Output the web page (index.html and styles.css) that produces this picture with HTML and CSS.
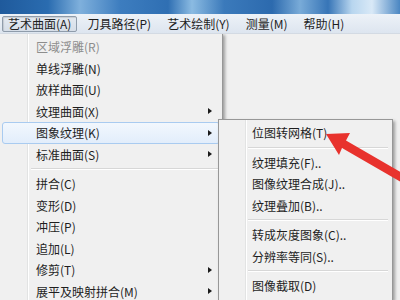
FILE: index.html
```html
<!DOCTYPE html>
<html lang="zh-CN">
<head>
  <meta charset="UTF-8">
  <title>艺术曲面菜单</title>
  <link rel="stylesheet" href="styles.css">
</head>
<body>

<div class="titlebar"></div>

<div class="menubar">
  <div class="menubar-item active">艺术曲面(A)</div>
  <div class="menubar-item">刀具路径(P)</div>
  <div class="menubar-item">艺术绘制(Y)</div>
  <div class="menubar-item">测量(M)</div>
  <div class="menubar-item">帮助(H)</div>
</div>

<div class="workspace">

  <div class="menu main-menu">
    <div class="item disabled">区域浮雕(R)</div>
    <div class="item">单线浮雕(N)</div>
    <div class="item">放样曲面(U)</div>
    <div class="item sub">纹理曲面(X)<span class="arrow"></span></div>
    <div class="item sub hover">图象纹理(K)<span class="arrow"></span></div>
    <div class="item sub">标准曲面(S)<span class="arrow"></span></div>
    <div class="sep"></div>
    <div class="item">拼合(C)</div>
    <div class="item">变形(D)</div>
    <div class="item">冲压(P)</div>
    <div class="item">追加(L)</div>
    <div class="item sub">修剪(T)<span class="arrow"></span></div>
    <div class="item sub">展平及映射拼合(M)<span class="arrow"></span></div>
  </div>

  <div class="menu sub-menu">
    <div class="item">位图转网格(T)</div>
    <div class="sep"></div>
    <div class="item">纹理填充(F)..</div>
    <div class="item">图像纹理合成(J)..</div>
    <div class="item">纹理叠加(B)..</div>
    <div class="sep"></div>
    <div class="item">转成灰度图象(C)..</div>
    <div class="item">分辨率等同(S)..</div>
    <div class="sep"></div>
    <div class="item">图像截取(D)</div>
  </div>

  <!-- 标注箭头 -->
  <svg class="callout" width="400" height="266" viewBox="0 34 400 266">
    <polygon points="326,134 350,133 346,140.5 404,174 400,181.5 342,148 339,155" fill="#e8322d"/>
  </svg>

</div>

</body>
</html>
```

FILE: styles.css
```css
* {
  box-sizing: border-box;
  margin: 0;
  padding: 0;
}

body {
  width: 400px;
  height: 300px;
  overflow: hidden;
  background: #f0f0f0;
  font-family: "Noto Sans CJK SC", sans-serif;
  font-size: 12px;
  color: #1e1e1e;
}

.titlebar {
  height: 14px;
  background: linear-gradient(90deg, #1f5a9c 0%, #2a6cb0 12%, #7fb0dc 20%, #3d7dbf 30%, #2f6fb3 42%, #8bbbe2 48%, #3b7abb 56%, #2c6aae 68%, #79abd8 75%, #3775b7 82%, #b8d6ef 88%, #d9e9f7 93%, #4a86c2 100%);
}

.menubar {
  height: 20px;
  display: flex;
  align-items: center;
  background: linear-gradient(#edf2f8, #dde5ef);
  border-bottom: 1px solid #d3dae3;
}

.menubar-item {
  height: 16px;
  line-height: 14px;
  padding: 0 5px;
  margin: 0 2px;
  border: 1px solid transparent;
  border-radius: 2px;
  white-space: nowrap;
}

.menubar-item.active {
  border-color: #8f9cab;
  background: linear-gradient(#e3e9f0, #d6dee8);
  box-shadow: inset 1px 1px 1px rgba(0, 0, 0, 0.12);
}

.workspace {
  position: relative;
  height: 266px;
  overflow: hidden;
}

.menu {
  position: absolute;
  background: #f0f0f0;
  border: 1px solid #979797;
  border-bottom: none;
  box-shadow: 2px 2px 3px rgba(0, 0, 0, 0.35);
  padding: 2px;
  overflow: hidden;
}

.main-menu {
  left: -1px;
  top: -1px;
  width: 224px;
  height: 267px;
  background: linear-gradient(90deg, #f0f0f0 27px, #e2e3e3 27px, #e2e3e3 28px, #ffffff 28px, #ffffff 29px, #f0f0f0 29px);
}

.sub-menu {
  left: 218px;
  top: 85px;
  width: 175px;
  height: 181px;
  background: linear-gradient(90deg, #f0f0f0 26px, #e2e3e3 26px, #e2e3e3 27px, #ffffff 27px, #ffffff 28px, #f0f0f0 28px);
}

.item {
  height: 21.5px;
  display: flex;
  align-items: center;
  white-space: nowrap;
  border: 1px solid transparent;
  border-radius: 3px;
}

.main-menu .item {
  padding-left: 33px;
}

.sub-menu .item {
  padding-left: 30px;
}

.item.disabled {
  color: #8d8d8d;
}

.item.hover {
  border-color: #a9cbf0;
  background: linear-gradient(#f2f7fd, #e2edfb);
}

.arrow {
  margin-left: auto;
  margin-right: 7px;
  width: 0;
  height: 0;
  border-top: 3.5px solid transparent;
  border-bottom: 3.5px solid transparent;
  border-left: 4px solid #1a1a1a;
}

.sep {
  height: 8px;
  display: flex;
  flex-direction: column;
  justify-content: center;
}

.sep::before {
  content: "";
  height: 1px;
  background: #d7d7d7;
  border-bottom: 1px solid #ffffff;
  box-sizing: content-box;
}

.main-menu .sep {
  margin-left: 29px;
}

.sub-menu .sep {
  margin-left: 27px;
  margin-right: 2px;
}

.callout {
  position: absolute;
  left: 0;
  top: 0;
  pointer-events: none;
}
```
